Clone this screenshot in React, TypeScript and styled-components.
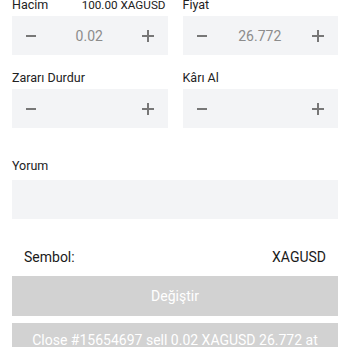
import React from 'react';
import styled, { createGlobalStyle } from 'styled-components';

const GlobalStyle = createGlobalStyle`
  html, body {
    margin: 0;
    padding: 0;
    background: #ffffff;
    font-family: Roboto, "Noto Sans", sans-serif;
    overflow: hidden;
  }
`;

type StepperProps = { value?: string };

const Stepper: React.FC<StepperProps> = ({ value }) => (
  <StepperBox>
    <StepButton>
      <svg width="10" height="10" viewBox="0 0 10 10">
        <rect x="0" y="4" width="10" height="2" fill="#777777" />
      </svg>
    </StepButton>
    <StepValue>{value ?? ''}</StepValue>
    <StepButton>
      <svg width="12" height="12" viewBox="0 0 12 12">
        <rect x="0" y="5" width="12" height="2" fill="#777777" />
        <rect x="5" y="0" width="2" height="12" fill="#777777" />
      </svg>
    </StepButton>
  </StepperBox>
);

const App: React.FC = () => {
  return (
    <>
      <GlobalStyle />
      <Page>
        <FieldGrid>
          <Field>
            <LabelRow>
              <Label>Hacim</Label>
              <Hint>100.00 XAGUSD</Hint>
            </LabelRow>
            <Stepper value="0.02" />
          </Field>
          <Field>
            <LabelRow>
              <Label>Fiyat</Label>
            </LabelRow>
            <Stepper value="26.772" />
          </Field>
          <Field>
            <LabelRow>
              <Label>Zararı Durdur</Label>
            </LabelRow>
            <Stepper />
          </Field>
          <Field>
            <LabelRow>
              <Label>Kârı Al</Label>
            </LabelRow>
            <Stepper />
          </Field>
        </FieldGrid>

        <CommentField>
          <Label>Yorum</Label>
          <CommentBox />
        </CommentField>

        <SymbolRow>
          <span>Sembol:</span>
          <span>XAGUSD</span>
        </SymbolRow>

        <ActionButton>Değiştir</ActionButton>
        <ActionButton $wide>Close #15654697 sell 0.02 XAGUSD 26.772 at 26.772</ActionButton>
      </Page>
    </>
  );
};

export default App;

const Page = styled.div`
  width: 350px;
  height: 350px;
  box-sizing: border-box;
  padding: 0 12px;
  margin-top: -3px;
  display: flex;
  flex-direction: column;
`;

const FieldGrid = styled.div`
  display: grid;
  grid-template-columns: 1fr 1fr;
  column-gap: 15px;
  row-gap: 15px;
`;

const Field = styled.div`
  display: flex;
  flex-direction: column;
  gap: 3px;
`;

const LabelRow = styled.div`
  display: flex;
  justify-content: space-between;
  align-items: baseline;
`;

const Label = styled.div`
  font-size: 12.5px;
  line-height: 16px;
  color: #222222;
`;

const Hint = styled.div`
  font-size: 11.7px;
  line-height: 16px;
  color: #222222;
  padding-right: 2px;
`;

const StepperBox = styled.div`
  height: 39px;
  background: #f3f4f6;
  display: flex;
  align-items: center;
  justify-content: space-between;
  padding: 0 13px 0 12px;
`;

const StepButton = styled.div`
  width: 14px;
  height: 14px;
  display: flex;
  align-items: center;
  justify-content: center;
`;

const StepValue = styled.div`
  flex: 1;
  text-align: center;
  font-size: 14px;
  color: #8c8c8c;
`;

const CommentField = styled.div`
  margin-top: 30px;
  display: flex;
  flex-direction: column;
  gap: 6px;
`;

const CommentBox = styled.div`
  height: 39px;
  background: #f3f4f6;
`;

const SymbolRow = styled.div`
  margin-top: 28px;
  padding: 0 12px;
  display: flex;
  justify-content: space-between;
  font-size: 14px;
  line-height: 20px;
  color: #1a1a1a;
`;

const ActionButton = styled.div<{ $wide?: boolean }>`
  margin-top: ${p => (p.$wide ? '7px' : '9px')};
  height: ${p => (p.$wide ? '60px' : '40px')};
  flex-shrink: 0;
  background: #d2d2d2;
  color: #ffffff;
  font-size: 14px;
  line-height: 20px;
  display: flex;
  align-items: flex-start;
  justify-content: center;
  text-align: center;
  padding: ${p => (p.$wide ? '7px 16px 0' : '10px 0 0')};
  box-sizing: border-box;
  overflow: hidden;
`;
